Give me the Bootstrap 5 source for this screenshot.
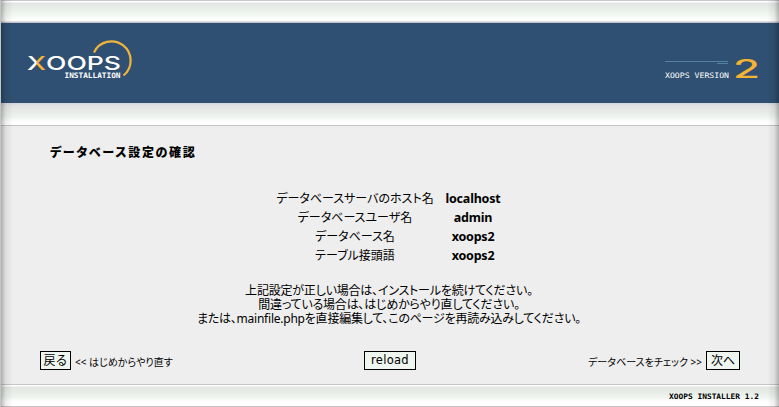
<!DOCTYPE html>
<html lang="ja">
<head>
<meta charset="utf-8">
<title>XOOPS Installation</title>
<link href="https://cdn.jsdelivr.net/npm/bootstrap@5.3.0/dist/css/bootstrap.min.css" rel="stylesheet">
<style>
body{height:407px;overflow:hidden;background:#eee;color:#000;font:12px/13px "Noto Sans","Noto Sans CJK JP",sans-serif;font-feature-settings:"palt"}
.frame{height:407px;border-left:1px solid #c3c6c7}
.frame::before,.frame::after{content:"";position:absolute;top:0;bottom:0;width:12px;pointer-events:none}
.frame::before{left:0;background:linear-gradient(90deg,#0004,#0001 40%,#0000)}
.frame::after{right:0;background:linear-gradient(270deg,#0004,#0001 40%,#0000)}
.strip{height:23px;background:linear-gradient(#c9c6cb 0 1px,#fff 1px 2px,#e2e4e2 3px,#eff5ef 13px,#fff 20px 21px,#c2c1c7 22px)}
.strip-mid{background:linear-gradient(#d7d7df 0 1px,#dfe1e0 2px,#edf2ed 13px,#fff 19px 22px,#c5c2c6 22px)}
.brand-bar{height:80px;background:#2f5072;padding:15px 19px 0 26px}
.brand-bar svg,.foot svg{display:block}
.content{height:258px}
.heading{font-size:12px;line-height:14px;font-weight:900;padding:20px 0 0 49px;margin:0;height:63px;letter-spacing:1.7px}
.settings{width:236px;margin-left:272px}
.settings td{height:19px;padding:0;text-align:center;white-space:nowrap;line-height:18px}
.settings td:first-child{width:164px}
.settings td:last-child{width:72px;font-weight:700;font-size:12.5px;letter-spacing:-.2px}
.message{height:46px;margin-top:19px;padding-right:2px;white-space:nowrap}
.message div{height:14px;line-height:14px;letter-spacing:-.2px}
.message .m2{height:14px;line-height:13px}
.message .m3{letter-spacing:-.23px}
.actions{font-size:10px;height:19px;margin-top:21px;padding:0 39px}
.key{background:#eff5ef;border:1px solid #000;border-radius:0;padding:0;height:19px;color:#000;font:12px/15px "Noto Sans","Noto Sans CJK JP",sans-serif}
.back{width:31px}.reload{width:52px;font-family:"DejaVu Sans",sans-serif;font-size:11.5px;letter-spacing:.3px}.next{width:34px}
.side{width:324px;white-space:nowrap}
.side span{padding-top:3px}
.foot{height:23px;padding-right:19px;background:linear-gradient(#c9c3c8 0 1px,#fff 1px 2px,#e3e6e3 3px,#edf2ed 12px,#fff 18px 22px,#c9c3c8 22px)}
.pixel{font-family:"DejaVu Sans Mono",monospace;font-size:7.5px}
</style>
<script src="https://cdn.jsdelivr.net/npm/bootstrap@5.3.0/dist/js/bootstrap.bundle.min.js"></script>
</head>
<body>
<main class="frame position-relative">
<div class="strip"></div>
<header class="brand-bar d-flex justify-content-between">
<svg width="110" height="50" viewBox="27 38 110 50" font-family="Inter,sans-serif">
<defs><linearGradient id="xfill"><stop offset=".48" stop-color="#fff"/><stop offset=".52" stop-color="#f5b335"/></linearGradient></defs>
<path d="M94 52.500A19.200 19.200 0 1 1 123.500 75.500" fill="none" stroke="#f0b43c" stroke-width="2.200"/>
<text x="27" y="69.800" font-size="19" font-weight="500" textLength="19" lengthAdjust="spacingAndGlyphs" fill="url(#xfill)">X</text>
<text x="46" y="69.800" font-size="19" textLength="75" lengthAdjust="spacingAndGlyphs" fill="#fff" font-weight="500">OOPS</text>
<text class="pixel" x="64.500" y="78" font-weight="700" textLength="56" lengthAdjust="spacingAndGlyphs" fill="#fff">INSTALLATION</text>
</svg>
<svg width="95" height="50" viewBox="665 38 95 50" font-family="Inter,sans-serif">
<path d="M665 61.500H728M717 63.500H728" stroke="#54809f" fill="none"/>
<text class="pixel" x="665" y="78" textLength="64" lengthAdjust="spacingAndGlyphs" fill="#fff">XOOPS VERSION</text>
<text x="733" y="78" font-size="25" textLength="27" lengthAdjust="spacingAndGlyphs" fill="#f5b335" font-weight="500">2</text>
</svg>
</header>
<div class="strip strip-mid"></div>
<section class="content">
<h1 class="heading">データベース設定の確認</h1>
<table class="settings">
<tr><td>データベースサーバのホスト名</td><td>localhost</td></tr>
<tr><td>データベースユーザ名</td><td>admin</td></tr>
<tr><td>データベース名</td><td>xoops2</td></tr>
<tr><td>テーブル接頭語</td><td>xoops2</td></tr>
</table>
<div class="message text-center">
<div>上記設定が正しい場合は、インストールを続けてください。</div>
<div class="m2">間違っている場合は、はじめからやり直してください。</div>
<div class="m3">または、mainfile.phpを直接編集して、このページを再読み込みしてください。</div>
</div>
<div class="actions d-flex align-items-center">
<div class="side d-flex align-items-center"><button class="key back">戻る</button><span class="ms-1">&lt;&lt; はじめからやり直す</span></div>
<button class="key reload">reload</button>
<div class="side d-flex align-items-center justify-content-end"><span class="me-1">データベースをチェック &gt;&gt;</span><button class="key next">次へ</button></div>
</div>
</section>
<footer class="foot d-flex justify-content-end">
<svg width="92" height="23" viewBox="668 384 92 23"><text class="pixel" x="669" y="399" font-weight="700" textLength="90" lengthAdjust="spacingAndGlyphs">XOOPS INSTALLER 1.2</text></svg>
</footer>
</main>
</body>
</html>
